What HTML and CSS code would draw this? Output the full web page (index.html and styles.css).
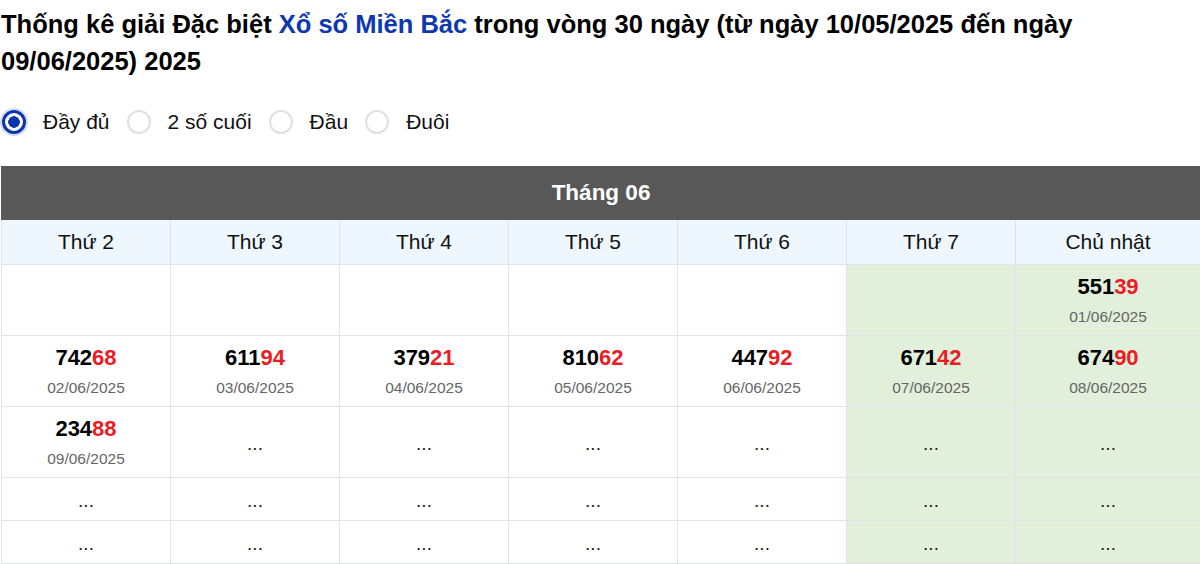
FILE: index.html
```html
<!DOCTYPE html>
<html lang="vi">
<head>
<meta charset="utf-8">
<title>Thống kê giải Đặc biệt</title>
<link rel="stylesheet" href="styles.css">
</head>
<body>
<div class="page">
  <h1 class="title">Thống kê giải Đặc biệt <a class="title-link" href="#">Xổ số Miền Bắc</a> trong vòng 30 ngày (từ ngày 10/05/2025 đến ngày 09/06/2025) 2025</h1>

  <div class="modes">
    <label class="mode"><input type="radio" name="mode" class="radio" checked><span class="mode-text">Đầy đủ</span></label>
    <label class="mode"><input type="radio" name="mode" class="radio"><span class="mode-text">2 số cuối</span></label>
    <label class="mode"><input type="radio" name="mode" class="radio"><span class="mode-text">Đầu</span></label>
    <label class="mode"><input type="radio" name="mode" class="radio"><span class="mode-text">Đuôi</span></label>
  </div>

  <table class="cal">
    <colgroup>
      <col class="c-day"><col class="c-day"><col class="c-day"><col class="c-day"><col class="c-day"><col class="c-day"><col class="c-sun">
    </colgroup>
    <thead>
      <tr><th colspan="7" class="month">Tháng 06</th></tr>
      <tr class="days">
        <th>Thứ 2</th><th>Thứ 3</th><th>Thứ 4</th><th>Thứ 5</th><th>Thứ 6</th><th>Thứ 7</th><th>Chủ nhật</th>
      </tr>
    </thead>
    <tbody>
      <tr class="row-tall">
        <td></td><td></td><td></td><td></td><td></td><td class="wk"></td>
        <td class="wk"><div class="num">551<span class="tail">39</span></div><div class="date">01/06/2025</div></td>
      </tr>
      <tr class="row-tall">
        <td><div class="num">742<span class="tail">68</span></div><div class="date">02/06/2025</div></td>
        <td><div class="num">611<span class="tail">94</span></div><div class="date">03/06/2025</div></td>
        <td><div class="num">379<span class="tail">21</span></div><div class="date">04/06/2025</div></td>
        <td><div class="num">810<span class="tail">62</span></div><div class="date">05/06/2025</div></td>
        <td><div class="num">447<span class="tail">92</span></div><div class="date">06/06/2025</div></td>
        <td class="wk"><div class="num">671<span class="tail">42</span></div><div class="date">07/06/2025</div></td>
        <td class="wk"><div class="num">674<span class="tail">90</span></div><div class="date">08/06/2025</div></td>
      </tr>
      <tr class="row-tall">
        <td><div class="num">234<span class="tail">88</span></div><div class="date">09/06/2025</div></td>
        <td class="dots"><span class="dot-text">...</span></td><td class="dots"><span class="dot-text">...</span></td><td class="dots"><span class="dot-text">...</span></td><td class="dots"><span class="dot-text">...</span></td>
        <td class="wk dots"><span class="dot-text">...</span></td><td class="wk dots"><span class="dot-text">...</span></td>
      </tr>
      <tr class="row-short">
        <td class="dots"><span class="dot-text">...</span></td><td class="dots"><span class="dot-text">...</span></td><td class="dots"><span class="dot-text">...</span></td><td class="dots"><span class="dot-text">...</span></td><td class="dots"><span class="dot-text">...</span></td>
        <td class="wk dots"><span class="dot-text">...</span></td><td class="wk dots"><span class="dot-text">...</span></td>
      </tr>
      <tr class="row-short">
        <td class="dots"><span class="dot-text">...</span></td><td class="dots"><span class="dot-text">...</span></td><td class="dots"><span class="dot-text">...</span></td><td class="dots"><span class="dot-text">...</span></td><td class="dots"><span class="dot-text">...</span></td>
        <td class="wk dots"><span class="dot-text">...</span></td><td class="wk dots"><span class="dot-text">...</span></td>
      </tr>
    </tbody>
  </table>
</div>
</body>
</html>
```

FILE: styles.css
```css
html, body {
  margin: 0;
  padding: 0;
  background: #ffffff;
}

body {
  font-family: "Liberation Sans", Arial, sans-serif;
  color: #000000;
}

.page {
  padding: 0 0 0 1px;
  overflow: hidden;
}

.title {
  margin: 0;
  padding-top: 6px;
  font-size: 25.5px;
  line-height: 37px;
  font-weight: 700;
  color: #000000;
}

.title-link {
  color: #0d38b1;
  text-decoration: none;
}

.modes {
  display: flex;
  align-items: center;
  gap: 16px;
  margin-top: 22px;
  height: 40px;
}

.mode {
  display: flex;
  align-items: center;
  gap: 17px;
  font-size: 21px;
  color: #111111;
}

.radio {
  appearance: none;
  -webkit-appearance: none;
  margin: 0 0 0 1px;
  width: 24px;
  height: 24px;
  border-radius: 50%;
  border: 2px solid #dfe0e3;
  background: #ffffff;
  box-sizing: border-box;
  flex: none;
}

.radio:checked {
  border: 3px solid #0b35ad;
  background: radial-gradient(circle, #0b35ad 0 5.5px, #ffffff 6px);
  box-shadow: 0 0 0 2px rgba(13, 56, 177, 0.18);
}

.cal {
  margin-top: 24px;
  width: 1199px;
  border-collapse: collapse;
  table-layout: fixed;
}

.c-day { width: 169px; }
.c-sun { width: 185px; }

.cal th, .cal td {
  border: 1px solid #e2e3e6;
  text-align: center;
  padding: 0;
}

.month {
  background: #585858;
  color: #ffffff;
  font-size: 22.5px;
  font-weight: 700;
  height: 52px;
  border-color: #585858 !important;
}

.days th {
  background: #eef6fe;
  font-weight: 400;
  font-size: 21px;
  height: 44px;
  color: #111111;
}

.row-tall td { height: 70px; }
.row-short td { height: 42px; }

.wk { background: #e1efdb; }

.num {
  font-size: 22px;
  font-weight: 700;
  line-height: 26px;
  color: #000000;
}

.tail { color: #ea1c24; }

.date {
  margin-top: 8px;
  font-size: 15.5px;
  line-height: 18px;
  color: #666666;
}

.dots {
  font-size: 19px;
  line-height: 20px;
  color: #222222;
}

.dot-text {
  vertical-align: -3px;
}
```
